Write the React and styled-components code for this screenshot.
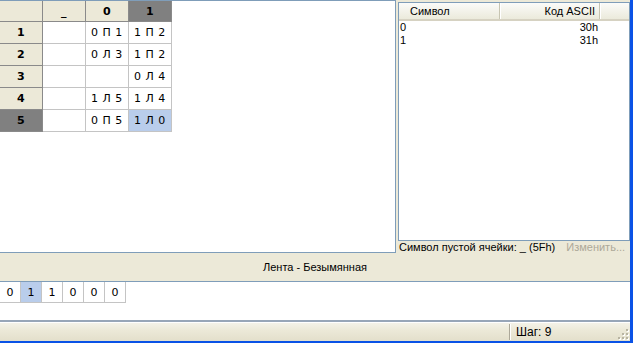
import React from "react";
import styled, { createGlobalStyle } from "styled-components";

const GlobalStyle = createGlobalStyle`
  html, body {
    margin: 0;
    padding: 0;
    background: #ece9d8;
  }
  body {
    font-family: "Liberation Sans", Arial, sans-serif;
    font-size: 11px;
    color: #000;
  }
`;

const Window = styled.div`
  width: 630px;
  height: 341px;
  border-right: 3px solid #0a52e6;
  border-bottom: 2px solid #0a52e6;
  background: #ece9d8;
  display: flex;
  flex-direction: column;
  overflow: hidden;
`;

const Main = styled.div`
  display: flex;
  height: 253px;
  flex: none;
`;

const GridPanel = styled.div`
  width: 395px;
  height: 251px;
  margin-left: -1px;
  border: 1px solid #7f9db9;
  background: #fff;
  flex: none;
`;

const Grid = styled.div`
  display: grid;
  grid-template-columns: repeat(4, 43px);
  grid-template-rows: 21px repeat(5, 22px);
`;

const Cell = styled.div`
  box-sizing: border-box;
  display: flex;
  align-items: center;
  justify-content: center;
  font-family: "DejaVu Sans", sans-serif;
  font-size: 11px;
  letter-spacing: 0.5px;
  border-right: 1px solid ${(p) => (p.$head ? "#8a8a8a" : "#c4c4c4")};
  border-bottom: 1px solid ${(p) => (p.$head ? "#8a8a8a" : "#c4c4c4")};
  font-weight: ${(p) => (p.$head ? "bold" : "normal")};
  background: ${(p) =>
    p.$active ? "#808080" : p.$sel ? "#b9cdeb" : p.$head ? "#ece9d8" : "#fff"};
`;

const Side = styled.div`
  flex: 1;
  margin-left: 2px;
  padding-top: 2px;
  display: flex;
  flex-direction: column;
`;

const ListBox = styled.div`
  height: 237px;
  border: 1px solid #7f9db9;
  background: #fff;
  flex: none;
`;

const ListHeader = styled.div`
  display: grid;
  grid-template-columns: 101px 100px 1fr;
  height: 18px;
  background: linear-gradient(#fbfbf9, #ebeadb);
  border-bottom: 2px solid #d6d2c2;
  box-sizing: border-box;
`;

const HeadCell = styled.div`
  display: flex;
  align-items: center;
  justify-content: ${(p) => (p.$right ? "flex-end" : "flex-start")};
  padding: ${(p) => (p.$right ? "0 4px 0 0" : "0 0 0 11px")};
  border-right: ${(p) => (p.$last ? "none" : "1px solid #c7c5b2")};
  box-shadow: ${(p) => (p.$last ? "none" : "1px 0 0 #fff")};
  color: #000;
`;

const ListRow = styled.div`
  display: grid;
  grid-template-columns: 101px 97px;
  height: 13px;
  line-height: 13px;
  padding-left: 1px;
`;

const Value = styled.span`
  text-align: ${(p) => (p.$right ? "right" : "left")};
`;

const BlankRow = styled.div`
  display: flex;
  align-items: center;
  height: 15px;
  padding-left: 1px;
  gap: 11px;
  white-space: nowrap;
`;

const LinkText = styled.span`
  color: #aca899;
`;

const TapeTitle = styled.div`
  height: 28px;
  display: flex;
  align-items: center;
  justify-content: center;
  flex: none;
`;

const TapeArea = styled.div`
  height: 38px;
  background: #fff;
  border-top: 1px solid #7f9db9;
  border-bottom: 2px solid #98a6b8;
  flex: none;
`;

const Tape = styled.div`
  display: flex;
`;

const TapeCell = styled.div`
  width: 20px;
  height: 20px;
  display: flex;
  align-items: center;
  justify-content: center;
  border-right: 1px solid #c4c4c4;
  border-bottom: 1px solid #c4c4c4;
  font-family: "DejaVu Sans", sans-serif;
  font-size: 11px;
  background: ${(p) => (p.$sel ? "#b9cdeb" : "#fff")};
`;

const StatusBar = styled.div`
  flex: 1;
  display: flex;
  align-items: center;
  background: linear-gradient(#f4f2e8, #ece9d8 40%, #e3dfcb);
  border-top: 1px solid #fff;
  position: relative;
`;

const StatusPane = styled.div`
  margin-left: 509px;
  padding-left: 6px;
  height: 16px;
  display: flex;
  align-items: center;
  border-left: 1px solid #aca899;
  box-shadow: inset 1px 0 0 #fff;
  font-size: 12px;
`;

const Grip = styled.svg`
  position: absolute;
  right: 1px;
  bottom: 1px;
`;

const header = ["", "_", "0", "1"];
const rows = [
  ["1", "", "0 П 1", "1 П 2"],
  ["2", "", "0 Л 3", "1 П 2"],
  ["3", "", "", "0 Л 4"],
  ["4", "", "1 Л 5", "1 Л 4"],
  ["5", "", "0 П 5", "1 Л 0"],
];
const tape = ["0", "1", "1", "0", "0", "0"];

const App = () => {
  return (
    <>
      <GlobalStyle />
      <Window>
        <Main>
          <GridPanel>
            <Grid>
              {header.map((h, i) => (
                <Cell key={"h" + i} $head $active={i === 3}>
                  {h}
                </Cell>
              ))}
              {rows.map((r, ri) =>
                r.map((c, ci) => (
                  <Cell
                    key={ri + "-" + ci}
                    $head={ci === 0}
                    $active={ci === 0 && ri === 4}
                    $sel={ri === 4 && ci === 3}
                  >
                    {c}
                  </Cell>
                ))
              )}
            </Grid>
          </GridPanel>
          <Side>
            <ListBox>
              <ListHeader>
                <HeadCell>Символ</HeadCell>
                <HeadCell $right>Код ASCII</HeadCell>
                <HeadCell $last />
              </ListHeader>
              <ListRow>
                <Value>0</Value>
                <Value $right>30h</Value>
              </ListRow>
              <ListRow>
                <Value>1</Value>
                <Value $right>31h</Value>
              </ListRow>
            </ListBox>
            <BlankRow>
              <span>Символ пустой ячейки: _ (5Fh)</span>
              <LinkText>Изменить...</LinkText>
            </BlankRow>
          </Side>
        </Main>
        <TapeTitle>Лента - Безымянная</TapeTitle>
        <TapeArea>
          <Tape>
            {tape.map((t, i) => (
              <TapeCell key={i} $sel={i === 1}>
                {t}
              </TapeCell>
            ))}
          </Tape>
        </TapeArea>
        <StatusBar>
          <StatusPane>Шаг: 9</StatusPane>
          <Grip width="12" height="12" viewBox="0 0 12 12">
            {[
              [9, 1],
              [5, 5],
              [9, 5],
              [1, 9],
              [5, 9],
              [9, 9],
            ].map(([x, y], i) => (
              <g key={i}>
                <rect x={x + 1} y={y + 1} width="2" height="2" fill="#fff" />
                <rect x={x} y={y} width="2" height="2" fill="#b8b4a2" />
              </g>
            ))}
          </Grip>
        </StatusBar>
      </Window>
    </>
  );
};

export default App;
